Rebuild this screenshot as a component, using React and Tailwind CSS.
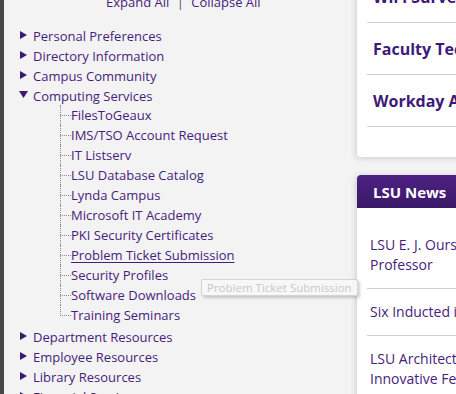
import React from 'react';

const font = { fontFamily: '"Open Sans", "Noto Sans", sans-serif' };

const topSections = [
  'Personal Preferences',
  'Directory Information',
  'Campus Community',
];

const computing = [
  'FilesToGeaux',
  'IMS/TSO Account Request',
  'IT Listserv',
  'LSU Database Catalog',
  'Lynda Campus',
  'Microsoft IT Academy',
  'PKI Security Certificates',
  'Problem Ticket Submission',
  'Security Profiles',
  'Software Downloads',
  'Training Seminars',
];

const bottomSections = [
  'Department Resources',
  'Employee Resources',
  'Library Resources',
  'Financial Services',
];

function Caret({ open }) {
  return open ? (
    <svg width="9" height="7" viewBox="0 0 9 7" className="shrink-0 -mt-[3px]">
      <polygon points="0,0 9,0 4.5,7" fill="#3b1a73" />
    </svg>
  ) : (
    <svg width="7" height="8" viewBox="0 0 7 8" className="shrink-0 -mt-[3px]">
      <polygon points="0,0 7,4 0,8" fill="#3b1a73" />
    </svg>
  );
}

function Section({ label, open }) {
  return (
    <li className="h-[20px] flex items-center">
      <span className={`w-[14px] flex items-center ${open ? 'pl-[0px]' : 'pl-[1px]'}`}>
        <Caret open={open} />
      </span>
      <a className="text-[#461d7c] whitespace-nowrap">{label}</a>
    </li>
  );
}

function SubItem({ label, last, hover }) {
  return (
    <li className="h-[20px] flex items-stretch">
      <span className="relative w-[11px] shrink-0">
        <span
          className={`absolute left-0 top-0 border-l border-dotted border-[#8a8a8a] ${last ? 'h-[11px]' : 'h-full'}`}
        />
        <span className="absolute left-0 top-[10px] w-[11px] border-t border-dotted border-[#8a8a8a]" />
      </span>
      <a
        className={`flex items-center text-[#461d7c] whitespace-nowrap ${hover ? 'underline underline-offset-[2px]' : ''}`}
      >
        {label}
      </a>
    </li>
  );
}

function Heading({ children }) {
  return (
    <div className="h-[52px] flex items-center pl-[6px] border-b border-[#cfcfcf] text-[16px] font-bold text-[#3e1a78] whitespace-nowrap">
      {children}
    </div>
  );
}

function NewsItem({ lines }) {
  return (
    <div className="py-[13px] border-b border-[#cfcfcf] pl-[3px] text-[14px] leading-[20px] text-[#461d7c]">
      {lines.map((l) => (
        <div key={l} className="whitespace-nowrap">
          {l}
        </div>
      ))}
    </div>
  );
}

export default function App() {
  return (
    <div
      className="w-[456px] h-[394px] overflow-hidden flex bg-[#f3f3f3] text-[13px] leading-[20px]"
      style={font}
    >
      <div className="w-[4px] shrink-0 bg-[#474747]" />

      {/* left nav tree */}
      <div className="relative w-[353px] shrink-0">
        <div className="-mt-[8px] pl-[102px] text-[#461d7c] whitespace-nowrap">
          Expand All <span className="mx-[4px] text-[#5a4a7a]">|</span> Collapse All
        </div>
        <ul className="mt-[14px] pl-[15px]">
          {topSections.map((s) => (
            <Section key={s} label={s} />
          ))}
          <Section label="Computing Services" open />
          <li className="mb-[2px]">
            <ul className="pl-[41px] -mt-[1px]">
              {computing.map((c, i) => (
                <SubItem
                  key={c}
                  label={c}
                  last={i === computing.length - 1}
                  hover={c === 'Problem Ticket Submission'}
                />
              ))}
            </ul>
          </li>
          {bottomSections.map((s) => (
            <Section key={s} label={s} />
          ))}
        </ul>

        {/* tooltip */}
        <div className="absolute left-[197px] top-[279px] h-[17px] px-[5px] flex items-center bg-[#f7f7f7] border border-[#d4d4d4] rounded-[2px] shadow-[2px_2px_3px_rgba(0,0,0,0.18)] text-[11.5px] text-[#c8c8c8] whitespace-nowrap">
          Problem Ticket Submission
        </div>
      </div>

      {/* right column */}
      <div className="w-[300px] shrink-0">
        <div className="-mt-[29px] bg-white rounded-bl-[4px] pl-[10px] pb-[30px] shadow-[-1px_1px_6px_rgba(0,0,0,0.16)]">
          <Heading>WiFi Survey</Heading>
          <Heading>Faculty Technology Survey</Heading>
          <Heading>Workday Academy</Heading>
        </div>

        <div className="mt-[18px] shadow-[-1px_1px_6px_rgba(0,0,0,0.16)]">
          <div className="h-[33px] flex items-center pl-[16px] rounded-tl-[4px] bg-gradient-to-b from-[#4e2183] to-[#3a1868] text-white font-bold text-[15px]">
            LSU News
          </div>
          <div className="bg-white pl-[10px] pt-[14px] h-[300px]">
            <NewsItem lines={['LSU E. J. Ourso College of Business Names', 'Professor']} />
            <NewsItem lines={['Six Inducted into LSU Alumni Hall of Distinction']} />
            <div className="py-[13px] pl-[3px] text-[14px] leading-[20px] text-[#461d7c] whitespace-nowrap">
              <div>LSU Architecture Students Design</div>
              <div>Innovative Fencing</div>
            </div>
          </div>
        </div>
      </div>
    </div>
  );
}
